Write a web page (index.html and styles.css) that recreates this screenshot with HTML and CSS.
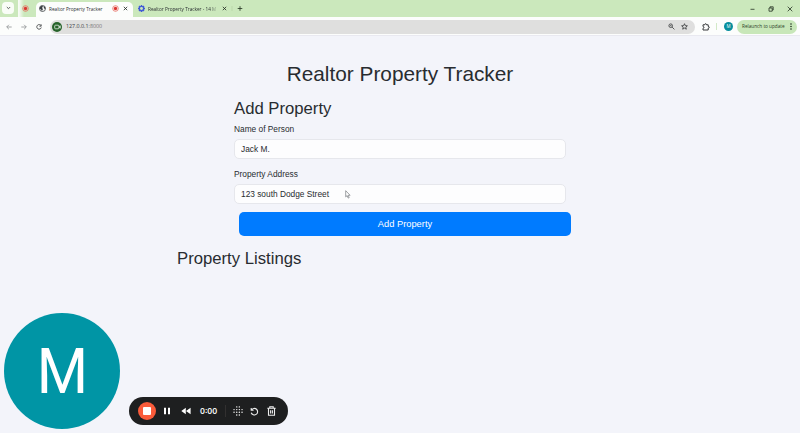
FILE: index.html
```html
<!DOCTYPE html>
<html lang="en">
<head>
<meta charset="utf-8">
<title>Realtor Property Tracker</title>
<link rel="stylesheet" href="styles.css">
</head>
<body>
<header class="browser">
  <div class="tabs">
    <button class="search-tabs" aria-label="Search tabs"><svg width="5" height="4" viewBox="0 0 5 4"><path d="M.8 1 2.5 2.7 4.2 1"/></svg></button>
    <div class="pinned"><svg class="rec" width="7" height="7" viewBox="0 0 7 7"><circle cx="3.5" cy="3.5" r="2.8"/><circle class="dot" cx="3.5" cy="3.5" r="1.7"/></svg></div>
    <div class="tab active">
      <svg class="globe" width="7" height="7" viewBox="0 0 14 14"><circle cx="7" cy="7" r="6"/><path class="land" d="M2 4 6 1l2 2-2 3 2 2-2 4-2-3-3-2zM9 2l3 2 1 4-3-1z"/></svg>
      <span class="tab-title">Realtor Property Tracker</span>
      <svg class="rec" width="7" height="7" viewBox="0 0 7 7"><circle cx="3.5" cy="3.5" r="2.8"/><circle class="dot" cx="3.5" cy="3.5" r="1.7"/></svg>
      <svg class="close" width="5" height="5" viewBox="0 0 5 5"><path d="m.8.8 3.4 3.4m0-3.4L.8 4.2"/></svg>
    </div>
    <div class="tab second">
      <svg class="loom" width="7" height="7" viewBox="0 0 14 14"><circle cx="7" cy="7" r="4.3"/><path d="M7 0v3M7 11v3M0 7h3M11 7h3M2 2l2 2M10 10l2 2M12 2l-2 2M4 10l-2 2"/></svg>
      <span class="tab-title clipped">Realtor Property Tracker - 14 M</span>
      <svg class="close" width="5" height="5" viewBox="0 0 5 5"><path d="m.8.8 3.4 3.4m0-3.4L.8 4.2"/></svg>
    </div>
    <svg class="plus" width="15" height="7" viewBox="0 0 15 7"><path class="divider" d="M1 1v5"/><path d="M6.7 3.5h4.6M9 1.2v4.6"/></svg>
    <div class="window-controls">
      <svg width="5" height="6" viewBox="0 0 5 6"><path d="M.5 3.3h4"/></svg>
      <svg width="6" height="6" viewBox="0 0 6 6"><path d="M1 2h3.2v3.2H1zM2 2V.8h3.2V4h-1"/></svg>
      <svg width="6" height="6" viewBox="0 0 6 6"><path d="m.7.7 4.6 4.6m0-4.6L.7 5.3"/></svg>
    </div>
  </div>
  <div class="toolbar">
    <nav class="nav-icons">
      <svg class="dim" width="6" height="6" viewBox="0 0 6 6"><path d="M5.7 3H.8M2.9.8.7 3l2.2 2.2"/></svg>
      <svg class="dim" width="6" height="6" viewBox="0 0 6 6"><path d="M.3 3h4.9M3.1.8 5.3 3 3.1 5.2"/></svg>
      <svg width="6" height="6" viewBox="0 0 6 6"><path d="M5 1.6A2.3 2.3 0 1 0 5.3 3.5M5.2.4v1.8H3.4"/></svg>
    </nav>
    <div class="address">
      <span class="site"><svg width="7" height="6" viewBox="0 0 7 6"><rect x=".7" y="1.2" width="4.2" height="3.6" rx=".8"/><path d="m5 2.7 1.3-.9v2.4L5 3.3"/></svg></span>
      <span class="url">127.0.0.1<span class="port">:8000</span></span>
      <svg class="zoom" width="7" height="7" viewBox="0 0 7 7"><circle cx="2.7" cy="2.7" r="1.8"/><path d="m4.1 4.1 2.3 2.3M1.9 2.7h1.6"/></svg>
      <svg width="7" height="7" viewBox="0 0 7 7"><path d="m3.5.7.8 1.9 2.1.2-1.6 1.3.5 2.1-1.8-1.1-1.8 1.1.5-2.1L.6 2.8l2.1-.2z"/></svg>
    </div>
    <svg class="extension" width="8" height="8" viewBox="0 0 8 8"><path d="M1 1.8h1.7c0-1.5 1.8-1.5 1.8 0h1.7v1.6c1.5 0 1.5 1.8 0 1.8V7H1V5.3c1.3 0 1.3-1.8 0-1.8z"/></svg>
    <span class="tool-divider"></span>
    <span class="profile">M</span>
    <button class="update">Relaunch to update <svg width="2" height="7" viewBox="0 0 2 7"><circle cx="1" cy="1" r=".8"/><circle cx="1" cy="3.5" r=".8"/><circle cx="1" cy="6" r=".8"/></svg></button>
  </div>
</header>
<main class="container">
  <h1>Realtor Property Tracker</h1>
  <form class="property-form">
    <h2>Add Property</h2>
    <label for="person">Name of Person</label>
    <input id="person" type="text" value="Jack M.">
    <label for="address">Property Address</label>
    <input id="address" type="text" value="123 south Dodge Street">
    <button class="submit" type="button">Add Property</button>
  </form>
  <h2 class="listings">Property Listings</h2>
</main>
<svg class="cursor" width="6" height="9" viewBox="0 0 6 9"><path d="M.7.7v6.2l1.4-1.3 1.1 2.5 1-.5-1.1-2.3h2z"/></svg>
<div class="camera"><span class="initial">M</span></div>
<div class="recorder">
  <span class="stop"></span>
  <svg class="pause" width="8" height="8" viewBox="0 0 8 8"><path d="M1 .7h2v6.6H1zM5 .7h2v6.6H5z"/></svg>
  <svg class="rewind" width="10" height="8" viewBox="0 0 10 8"><path d="M4.8.7v6.6L.3 4zM9.6.7v6.6L5 4z"/></svg>
  <span class="time">0:00</span>
  <span class="rule"></span>
  <svg class="blur" width="10" height="10" viewBox="0 0 10 10"><path d="M3.7.9h.1M6.3.9h.1M1 3.6h.1M3.7 3.6h.1M6.3 3.6h.1M9 3.6h.1M1 6.3h.1M3.7 6.3h.1M6.3 6.3h.1M9 6.3h.1M3.7 9h.1M6.3 9h.1"/></svg>
  <svg class="restart" width="9" height="9" viewBox="0 0 9 9"><path d="M1.2.9v2.4h2.4M1.4 3.1a3.3 3.3 0 1 1-.2 2.7"/></svg>
  <svg class="trash" width="9" height="10" viewBox="0 0 9 10"><path d="M.3 2.3h8.4M2.8 2V.8h3.4V2M1.5 2.5v6.7h6V2.5M3.6 4.2v3.2M5.4 4.2v3.2"/></svg>
</div>
</body>
</html>
```

FILE: styles.css
```css
* { box-sizing: border-box; }
body {
  margin: 0;
  height: 433px;
  overflow: hidden;
  background: #f3f4fa;
  color: #282c30;
  font: 8.33px/12.5px "Liberation Sans", Arial, sans-serif;
}
svg { display: block; flex: none; fill: none; stroke: #36383a; stroke-width: .8; }
button { border: 0; padding: 0; font: inherit; }

.browser {
  height: 36px;
  background: #fcfdfc;
  border-bottom: 1px solid #e9e9f0;
  font-family: "Open Sans", "Noto Sans", sans-serif;
}
.tabs { display: flex; height: 17px; background: #cbe8bc; align-items: stretch; }
.search-tabs {
  display: flex;
  align-items: center;
  justify-content: center;
  width: 12px;
  height: 12px;
  margin: 2px 4px 0 2px;
  border-radius: 4px;
  background: #f9fdf7;
}
.pinned {
  display: flex;
  align-items: center;
  width: 18px;
  padding-left: 4px;
  background: linear-gradient(90deg, #f7fbf5 0, #f7fbf5 1px, #cbe8bc 6px);
}
.tab { display: flex; align-items: center; font-size: 4.7px; line-height: 8px; white-space: nowrap; }
.active { width: 97px; margin-top: 2px; padding: 0 5px 2px 3px; border-radius: 5px 5px 0 0; background: #fcfdfc; }
.tab-title { width: 60px; margin-left: 3px; }
.active .rec { margin-left: 3px; }
.close { margin-left: auto; stroke: #202820; }
.rec { stroke: #e76b61; }
.rec .dot { fill: #dd352f; stroke: none; }
.globe { stroke: #3b4043; stroke-width: 1.6; }
.globe .land { fill: #3b4043; stroke: none; }
.second { width: 94px; padding-left: 5px; }
.clipped { width: 71px; -webkit-mask-image: linear-gradient(90deg, #000 88%, transparent); mask-image: linear-gradient(90deg, #000 88%, transparent); }
.second .close { margin-left: 4px; }
.loom { stroke: #415bd6; stroke-width: 2.7; }
.plus { align-self: center; margin-left: 4px; stroke: #243322; }
.divider { stroke: #a8c99b; stroke-width: .5; }
.window-controls { display: flex; align-items: center; gap: 13px; margin-left: auto; padding-right: 7px; }
.window-controls svg { stroke: #273325; }

.toolbar { display: flex; align-items: center; height: 18px; padding: 1px 3px 0 6px; }
.nav-icons { display: flex; gap: 9px; width: 44px; }
.dim { stroke: #8d9092; }
.address {
  display: flex;
  align-items: center;
  width: 645px;
  height: 14px;
  padding: 0 7px 0 2px;
  border-radius: 7px;
  background: #dfdfde;
}
.site { display: flex; align-items: center; justify-content: center; width: 10px; height: 10px; border-radius: 50%; background: #27632a; }
.site svg { stroke: #fff; stroke-width: .7; }
.url { margin-left: 4px; color: #383c3d; font-size: 5.35px; }
.port { color: #777; }
.zoom { margin-left: auto; margin-right: 6px; }
.extension { margin-left: 7px; stroke-width: 1; }
.tool-divider { width: 1px; height: 7px; margin-left: 6px; background: #d2e9c7; }
.profile {
  width: 9px;
  height: 9px;
  margin-left: 7px;
  border-radius: 50%;
  background: #078e9d;
  color: #fff;
  font-size: 4.5px;
  line-height: 9px;
  text-align: center;
}
.update {
  display: flex;
  align-items: center;
  justify-content: space-between;
  width: 60px;
  height: 14px;
  margin-left: auto;
  padding: 0 5px;
  border-radius: 7px;
  background: #c8e7b9;
  color: #293d25;
  font-size: 4.7px;
  white-space: nowrap;
}
.update svg { fill: #243322; stroke: none; }

.container { width: 446px; margin: 0 auto; padding-top: 25px; }
h1, h2 { margin: 0; font-weight: 400; }
h1 { font-size: 20.8px; line-height: 25px; text-align: center; }
h2 { font-size: 16.7px; line-height: 20px; }
.property-form { width: 332px; margin: 13px 57px 0; }
.property-form label { display: block; height: 12px; margin: 4px 0; line-height: 12px; }
.property-form input {
  display: block;
  width: 332px;
  height: 20px;
  margin-bottom: 8px;
  padding: 0 6px;
  border: 1px solid #e6e7ec;
  border-radius: 5px;
  background: #fdfdfe;
  color: #282c30;
  font: inherit;
}
.property-form label + input + label { margin-top: 9px; }
.submit {
  display: block;
  width: 332px;
  height: 24px;
  margin-left: 5px;
  border-radius: 5px;
  background: #007bff;
  color: #fff;
  font-size: 9.3px;
}
.listings { margin-top: 13px; }

.cursor { position: absolute; left: 345px; top: 190px; fill: #fff; stroke: #777a7e; stroke-width: .7; }
.camera {
  position: absolute;
  left: 4px;
  top: 313px;
  width: 116px;
  height: 116px;
  border-radius: 50%;
  background: #0095a5;
  color: #fff;
  font: 62.5px/118px Roboto, sans-serif;
  text-align: center;
}
.initial { display: inline-block; transform: scaleX(.94); }
.recorder {
  position: absolute;
  left: 129px;
  top: 397px;
  display: flex;
  align-items: center;
  width: 159px;
  height: 28px;
  padding-left: 9px;
  border-radius: 14px;
  background: #1e1f20;
  color: #fff;
}
.recorder svg { stroke: #eee; stroke-width: 1.1; }
.stop { display: flex; align-items: center; justify-content: center; width: 18px; height: 18px; border-radius: 50%; background: #fa5b3a; }
.stop::before { content: ""; width: 8px; height: 8px; border-radius: 1px; background: #fff; }
.recorder .pause, .recorder .rewind { fill: #fff; stroke: none; }
.pause { margin-left: 7px; }
.rewind { margin-left: 10px; }
.time { width: 17px; margin-left: 9px; padding-top: 1px; font: 600 7.5px/10px Inter, sans-serif; white-space: nowrap; }
.rule { width: 1px; height: 12px; margin: 0 7px 0 8px; background: #323030; }
.recorder .blur { stroke-linecap: round; stroke-width: 1.4; }
.restart { margin-left: 7px; }
.trash { margin-left: 8px; }
```
